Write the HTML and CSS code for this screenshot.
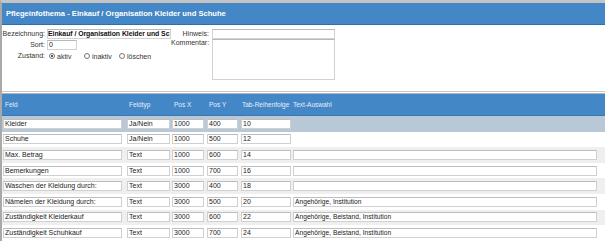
FILE: index.html
```html
<!DOCTYPE html>
<html lang="de">
<head>
<meta charset="utf-8">
<link rel="stylesheet" href="styles.css">
</head>
<body>
<div class="page">
  <div class="title-bar">Pflegeinfothema - Einkauf / Organisation Kleider und Schuhe</div>
  <div class="form">
    <div class="form-left">
      <label class="lbl">Bezeichnung:</label>
      <div class="field wide bold">Einkauf / Organisation Kleider und Sc</div>
      <label class="lbl">Sort:</label>
      <div class="field short">0</div>
      <label class="lbl">Zustand:</label>
      <div class="radios">
        <span class="radio-item"><span class="radio checked"></span>aktiv</span>
        <span class="radio-item"><span class="radio"></span>inaktiv</span>
        <span class="radio-item"><span class="radio"></span>löschen</span>
      </div>
    </div>
    <div class="form-right">
      <label class="lbl">Hinweis:</label>
      <div class="field wide"></div>
      <label class="lbl">Kommentar:</label>
      <div class="field area"></div>
    </div>
  </div>
  <div class="sep"></div>
  <div class="table">
    <div class="row head">
      <div class="c1">Feld</div>
      <div class="c2">Feldtyp</div>
      <div class="c3">Pos X</div>
      <div class="c4">Pos Y</div>
      <div class="c5">Tab-Reihenfolge</div>
      <div class="c6">Text-Auswahl</div>
    </div>
    <div class="row selected">
      <div class="c1 cell">Kleider</div>
      <div class="c2 cell">Ja/Nein</div>
      <div class="c3 cell">1000</div>
      <div class="c4 cell">400</div>
      <div class="c5 cell">10</div>
    </div>
    <div class="row">
      <div class="c1 cell">Schuhe</div>
      <div class="c2 cell">Ja/Nein</div>
      <div class="c3 cell">1000</div>
      <div class="c4 cell">500</div>
      <div class="c5 cell">12</div>
    </div>
    <div class="row alt">
      <div class="c1 cell">Max. Betrag</div>
      <div class="c2 cell">Text</div>
      <div class="c3 cell">1000</div>
      <div class="c4 cell">600</div>
      <div class="c5 cell">14</div>
      <div class="c6 cell"></div>
    </div>
    <div class="row">
      <div class="c1 cell">Bemerkungen</div>
      <div class="c2 cell">Text</div>
      <div class="c3 cell">1000</div>
      <div class="c4 cell">700</div>
      <div class="c5 cell">16</div>
      <div class="c6 cell"></div>
    </div>
    <div class="row alt">
      <div class="c1 cell">Waschen der Kleidung durch:</div>
      <div class="c2 cell">Text</div>
      <div class="c3 cell">3000</div>
      <div class="c4 cell">400</div>
      <div class="c5 cell">18</div>
      <div class="c6 cell"></div>
    </div>
    <div class="row">
      <div class="c1 cell">Nämelen der Kleidung durch:</div>
      <div class="c2 cell">Text</div>
      <div class="c3 cell">3000</div>
      <div class="c4 cell">500</div>
      <div class="c5 cell">20</div>
      <div class="c6 cell">Angehörige, Institution</div>
    </div>
    <div class="row alt">
      <div class="c1 cell">Zuständigkeit Kleiderkauf</div>
      <div class="c2 cell">Text</div>
      <div class="c3 cell">3000</div>
      <div class="c4 cell">600</div>
      <div class="c5 cell">22</div>
      <div class="c6 cell">Angehörige, Beistand, Institution</div>
    </div>
    <div class="row">
      <div class="c1 cell">Zuständigkeit Schuhkauf</div>
      <div class="c2 cell">Text</div>
      <div class="c3 cell">3000</div>
      <div class="c4 cell">700</div>
      <div class="c5 cell">24</div>
      <div class="c6 cell">Angehörige, Beistand, Institution</div>
    </div>
  </div>
</div>
</body>
</html>
```

FILE: styles.css
```css
html, body {
  margin: 0;
  padding: 0;
  background: #ffffff;
}
body {
  font-family: "Liberation Sans", Arial, sans-serif;
  font-size: 7px;
  color: #222;
}
.page {
  width: 605px;
  height: 241px;
  box-sizing: border-box;
  border-top: 3px solid #c4c4c4;
  border-left: 2px solid #a9a9a9;
  overflow: hidden;
}
.title-bar {
  height: 22px;
  box-sizing: border-box;
  background: #4387c7;
  border-bottom: 1px solid #2f6ea8;
  color: #fff;
  font-weight: bold;
  font-size: 7.6px;
  line-height: 21px;
  padding-left: 4px;
}
.form {
  display: flex;
  height: 66px;
  box-sizing: border-box;
  padding-top: 4px;
}
.form-left {
  display: grid;
  grid-template-columns: 43px 124px;
  grid-auto-rows: 10px;
  column-gap: 2px;
  row-gap: 1px;
  width: 169px;
  align-items: center;
}
.form-right {
  display: grid;
  grid-template-columns: 38px 123px;
  grid-template-rows: 10px 40px;
  column-gap: 3px;
  row-gap: 0;
}
.lbl {
  text-align: right;
  color: #333;
  white-space: nowrap;
  line-height: 10px;
}
.form-right .lbl {
  line-height: 9px;
}
.form-right .lbl:nth-of-type(2) {
  line-height: 8px;
}
.field {
  box-sizing: border-box;
  border: 1px solid #d2d2d2;
  border-top-color: #b8b8b8;
  background: #fff;
  height: 10px;
  line-height: 8px;
  padding-left: 1px;
  white-space: nowrap;
  overflow: hidden;
  color: #222;
}
.field.bold {
  font-weight: bold;
  color: #111;
  font-size: 6.9px;
  padding-left: 0;
  letter-spacing: -0.05px;
}
.field.short {
  width: 30px;
}
.field.area {
  height: 41px;
}
.radios {
  display: flex;
  align-items: center;
  padding-left: 2px;
}
.radio-item {
  display: inline-flex;
  align-items: center;
  gap: 2px;
  color: #333;
}
.radio-item:nth-child(1) { width: 35px; }
.radio-item:nth-child(2) { width: 35px; }
.radio {
  display: inline-block;
  box-sizing: border-box;
  width: 6px;
  height: 6px;
  border: 1px solid #777;
  border-radius: 50%;
  background: #fff;
  position: relative;
}
.radio.checked::after {
  content: "";
  position: absolute;
  left: 1px;
  top: 1px;
  width: 2px;
  height: 2px;
  border-radius: 50%;
  background: #222;
}
.sep {
  height: 3px;
  box-sizing: border-box;
  border-top: 1px solid #c9c9c9;
  border-bottom: 1px solid #b5b5b5;
  background: #fff;
}
.table {
  display: flex;
  flex-direction: column;
}
.row {
  display: grid;
  grid-template-columns: 119px 48px 34px 34px 53px 306px;
  column-gap: 0;
  align-items: center;
  height: 15.6px;
  padding-left: 1px;
  white-space: nowrap;
}
.row .c2 { margin-left: 5px; }
.row .c3 { margin-left: 2px; }
.row .c4 { margin-left: 3px; }
.row .c5 { margin-left: 3px; }
.row .c6 { margin-left: 2px; }
.row.head {
  height: 22px;
  background: #4387c7;
  border-bottom: 1px solid #3a78b3;
  box-sizing: border-box;
  color: #e6eef8;
  font-size: 6.5px;
}
.row.head > div {
  padding-left: 2px;
}
.row.head .c5 { padding-left: 1px; }
.row.head .c6 { padding-left: 0; }
.row.selected {
  background: #b8c8d6;
}
.row.alt {
  background: #efefef;
}
.cell {
  box-sizing: border-box;
  height: 10px;
  border: 1px solid #d0d0d0;
  border-top-color: #bdbdbd;
  background: #fff;
  line-height: 8px;
  padding-left: 1px;
  white-space: nowrap;
  overflow: hidden;
  color: #222;
}
.cell.c6 {
  font-size: 6.7px;
}
```
